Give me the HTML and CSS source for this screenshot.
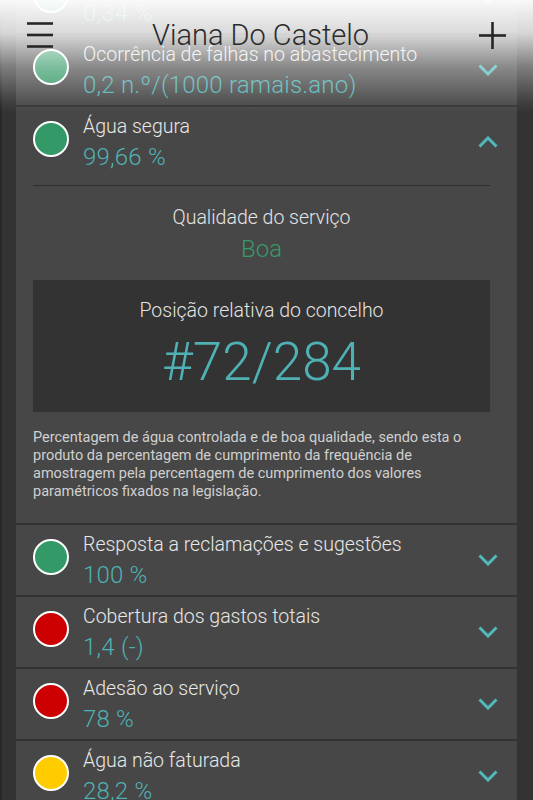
FILE: index.html
```html
<!DOCTYPE html>
<html lang="pt">
<head>
<meta charset="utf-8">
<title>Viana Do Castelo</title>
<link rel="stylesheet" href="styles.css">
</head>
<body>
<div class="topbar">
  <svg class="menu" width="26" height="28" viewBox="0 0 26 28"><g stroke="#262626" stroke-width="2.6"><line x1="0" y1="2.5" x2="26" y2="2.5"/><line x1="0" y1="14" x2="26" y2="14"/><line x1="0" y1="25.5" x2="26" y2="25.5"/></g></svg>
  <div class="app-title">Viana Do Castelo</div>
  <svg class="add" width="27" height="27" viewBox="0 0 27 27"><g stroke="#262626" stroke-width="2.6"><line x1="0" y1="13.5" x2="27" y2="13.5"/><line x1="13.5" y1="0" x2="13.5" y2="27"/></g></svg>
</div>

<div class="list">
  <div class="row">
    <span class="dot dot-green"></span>
    <div class="text"><div class="title">Acessibilidade física do serviço</div><div class="value">0,34 %</div></div>
    <svg class="chev" width="20" height="12" viewBox="0 0 20 12"><polyline points="1.5,1.5 10,10 18.5,1.5"/></svg>
  </div>
  <div class="row">
    <span class="dot dot-green"></span>
    <div class="text"><div class="title">Ocorrência de falhas no abastecimento</div><div class="value">0,2 n.º/(1000 ramais.ano)</div></div>
    <svg class="chev" width="20" height="12" viewBox="0 0 20 12"><polyline points="1.5,1.5 10,10 18.5,1.5"/></svg>
  </div>
  <div class="item-open">
    <div class="row">
      <span class="dot dot-green"></span>
      <div class="text"><div class="title">Água segura</div><div class="value">99,66 %</div></div>
      <svg class="chev" width="20" height="12" viewBox="0 0 20 12"><polyline points="1.5,10.5 10,2 18.5,10.5"/></svg>
    </div>
    <div class="details">
      <div class="divider"></div>
      <div class="quality-label">Qualidade do serviço</div>
      <div class="quality-value">Boa</div>
      <div class="rank-box">
        <div class="rank-label">Posição relativa do concelho</div>
        <div class="rank-value">#72/284</div>
      </div>
      <p class="desc">Percentagem de água controlada e de boa qualidade, sendo esta o produto da percentagem de cumprimento da frequência de amostragem pela percentagem de cumprimento dos valores paramétricos fixados na legislação.</p>
    </div>
  </div>
  <div class="row">
    <span class="dot dot-green"></span>
    <div class="text"><div class="title">Resposta a reclamações e sugestões</div><div class="value">100 %</div></div>
    <svg class="chev" width="20" height="12" viewBox="0 0 20 12"><polyline points="1.5,1.5 10,10 18.5,1.5"/></svg>
  </div>
  <div class="row">
    <span class="dot dot-red"></span>
    <div class="text"><div class="title">Cobertura dos gastos totais</div><div class="value">1,4 (-)</div></div>
    <svg class="chev" width="20" height="12" viewBox="0 0 20 12"><polyline points="1.5,1.5 10,10 18.5,1.5"/></svg>
  </div>
  <div class="row">
    <span class="dot dot-red"></span>
    <div class="text"><div class="title">Adesão ao serviço</div><div class="value">78 %</div></div>
    <svg class="chev" width="20" height="12" viewBox="0 0 20 12"><polyline points="1.5,1.5 10,10 18.5,1.5"/></svg>
  </div>
  <div class="row">
    <span class="dot dot-yellow"></span>
    <div class="text"><div class="title">Água não faturada</div><div class="value">28,2 %</div></div>
    <svg class="chev" width="20" height="12" viewBox="0 0 20 12"><polyline points="1.5,1.5 10,10 18.5,1.5"/></svg>
  </div>
</div>
</body>
</html>
```

FILE: styles.css
```css
html, body {
  margin: 0;
  padding: 0;
}
body {
  width: 533px;
  height: 800px;
  overflow: hidden;
  background: linear-gradient(to right, #272727 0 2px, #333333 2px);
  font-family: Roboto, "Noto Sans", sans-serif;
  position: relative;
}

/* Top bar overlaid with a white fade */
.topbar {
  position: absolute;
  left: 0;
  top: 0;
  width: 533px;
  height: 112px;
  z-index: 2;
  display: flex;
  align-items: flex-start;
  background: linear-gradient(to bottom,
    rgba(255,255,255,0.97) 0px,
    rgba(255,255,255,0.80) 33px,
    rgba(255,255,255,0.36) 67px,
    rgba(255,255,255,0.08) 100px,
    rgba(255,255,255,0) 112px);
}
.menu {
  margin-left: 27px;
  margin-top: 21px;
  flex: none;
}
.app-title {
  margin-left: 99px;
  margin-top: 18px;
  font-size: 29px;
  line-height: 34px;
  font-weight: 300;
  color: #2b2b2b;
}
.add {
  margin-left: auto;
  margin-right: 27px;
  margin-top: 22px;
  flex: none;
}

/* List */
.list {
  margin: -37px 16px 0 16px;
  display: flex;
  flex-direction: column;
  gap: 2px;
}
.row {
  height: 70px;
  box-sizing: border-box;
  background: #474747;
  display: flex;
  align-items: flex-start;
  padding: 0 19px 0 17px;
}
.item-open {
  background: #474747;
}
.dot {
  flex: none;
  width: 36px;
  height: 36px;
  box-sizing: border-box;
  border: 2px solid #ffffff;
  border-radius: 50%;
  margin-top: 14px;
  margin-right: 14px;
}
.dot-green { background: #339966; }
.dot-red { background: #cc0000; }
.dot-yellow { background: #ffcc00; }

.text {
  padding-top: 8px;
  min-width: 0;
}
.title {
  font-size: 19.5px;
  line-height: 24px;
  font-weight: 300;
  color: #e8e8e8;
  white-space: nowrap;
}
.value {
  margin-top: 4px;
  font-size: 24px;
  line-height: 28px;
  font-weight: 300;
  color: #4fb1b3;
  white-space: nowrap;
  letter-spacing: 0.2px;
}
.chev {
  flex: none;
  margin-left: auto;
  align-self: center;
  fill: none;
  stroke: #4fb9bc;
  stroke-width: 3;
}

/* Expanded details */
.details {
  padding: 0 27px 22px 17px;
}
.divider {
  margin-top: 8px;
  height: 1px;
  background: #2e2e2e;
}
.quality-label {
  margin-top: 20px;
  text-align: center;
  font-size: 19.5px;
  line-height: 24px;
  font-weight: 300;
  color: #e4e4e4;
}
.quality-value {
  margin-top: 5px;
  text-align: center;
  font-size: 24px;
  line-height: 28px;
  font-weight: 300;
  color: #379a68;
}
.rank-box {
  margin-top: 17px;
  background: #333333;
  padding: 19px 0 20px 0;
  text-align: center;
}
.rank-label {
  font-size: 19.5px;
  line-height: 24px;
  font-weight: 300;
  color: #e4e4e4;
}
.rank-value {
  margin-top: 9px;
  font-size: 53px;
  line-height: 60px;
  font-weight: 300;
  color: #4fb1b3;
}
.desc {
  margin: 17px 0 0 0;
  font-size: 14.5px;
  line-height: 18px;
  color: #d0d0d0;
}
```
